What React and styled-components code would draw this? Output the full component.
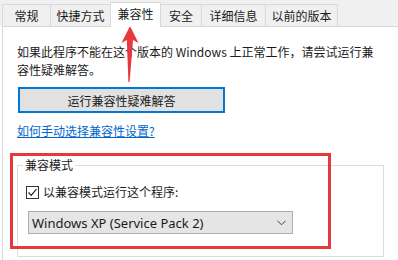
import styled, { createGlobalStyle } from "styled-components";

const GlobalStyle = createGlobalStyle`
  html, body {
    margin: 0;
    padding: 0;
    background: #ffffff;
  }
  body {
    font-family: "Noto Sans CJK SC", "Noto Sans", sans-serif;
    font-size: 12px;
    color: #1a1a1a;
  }
`;

const Frame = styled.div`
  position: relative;
  width: 398px;
  height: 260px;
  overflow: hidden;
  background: #ffffff;
`;

const TabStrip = styled.div`
  display: flex;
  align-items: flex-end;
  height: 26px;
  padding-left: 2px;
  background: #f0f0f0;
`;

const Tab = styled.div`
  position: relative;
  box-sizing: border-box;
  display: flex;
  align-items: center;
  justify-content: center;
  width: ${(p) => p.$width}px;
  height: ${(p) => (p.$active ? 25 : 22)}px;
  margin-left: -1px;
  margin-bottom: ${(p) => (p.$active ? -1 : 0)}px;
  border: 1px solid #d9d9d9;
  border-bottom: none;
  background: ${(p) => (p.$active ? "#ffffff" : "#f0f0f0")};
  z-index: ${(p) => (p.$active ? 2 : 1)};
  padding-bottom: ${(p) => (p.$active ? 2 : 0)}px;
  white-space: nowrap;
  line-height: 1;

  &:first-child {
    margin-left: 0;
  }
`;

const Panel = styled.div`
  position: relative;
  height: 240px;
  margin-left: 2px;
  padding: 16px 0 0 14px;
  border-top: 1px solid #d9d9d9;
  border-left: 1px solid #d9d9d9;
`;

const Intro = styled.p`
  margin: 0;
  line-height: 18px;
  white-space: nowrap;
`;

const TroubleButton = styled.button`
  display: block;
  box-sizing: border-box;
  width: 207px;
  height: 26px;
  margin: 8px 0 0 1px;
  padding: 0;
  border: 2px solid #0078d7;
  background: #e1e1e1;
  font-family: inherit;
  font-size: 12px;
  color: #1a1a1a;
`;

const HelpLink = styled.a`
  display: inline-block;
  margin-top: 9px;
  line-height: 18px;
  color: #0066cc;
  text-decoration: underline;
`;

const Group = styled.fieldset`
  box-sizing: border-box;
  width: 367px;
  min-inline-size: 0;
  margin: 16px 0 0 0;
  padding: 0 0 22px 8px;
  border: 1px solid #dcdcdc;
`;

const Legend = styled.legend`
  margin-left: -3px;
  padding: 0 2px;
  line-height: 18px;
`;

const CheckRow = styled.label`
  display: flex;
  align-items: center;
  gap: 4px;
  margin-top: 9px;
  line-height: 18px;
`;

const CheckBox = styled.span`
  box-sizing: border-box;
  display: flex;
  align-items: center;
  justify-content: center;
  width: 13px;
  height: 13px;
  border: 1px solid #333333;
  background: #ffffff;
`;

const Select = styled.div`
  box-sizing: border-box;
  display: flex;
  align-items: center;
  justify-content: space-between;
  width: 265px;
  height: 23px;
  margin: 10px 0 0 2px;
  padding: 0 6px 0 3px;
  border: 1px solid #adadad;
  background: #e5e5e5;
  font-family: "Noto Sans", "Noto Sans CJK SC", sans-serif;
  font-size: 13px;
`;

const Highlight = styled.div`
  position: absolute;
  left: 10px;
  top: 153px;
  width: 321px;
  height: 96px;
  box-sizing: border-box;
  border: 3px solid #e8383d;
  pointer-events: none;
`;

const Arrow = styled.svg`
  position: absolute;
  left: 116px;
  top: 20px;
  width: 30px;
  height: 66px;
  pointer-events: none;
`;

const tabs = [
  { label: "常规", width: 49 },
  { label: "快捷方式", width: 61 },
  { label: "兼容性", width: 51, active: true },
  { label: "安全", width: 42 },
  { label: "详细信息", width: 65 },
  { label: "以前的版本", width: 73 },
];

const App = () => {
  return (
    <Frame>
      <GlobalStyle />
      <TabStrip>
        {tabs.map((t) => (
          <Tab key={t.label} $width={t.width} $active={t.active}>
            {t.label}
          </Tab>
        ))}
      </TabStrip>
      <Panel>
        <Intro>
          如果此程序不能在这个版本的 Windows 上正常工作，请尝试运行兼
          <br />
          容性疑难解答。
        </Intro>
        <TroubleButton>运行兼容性疑难解答</TroubleButton>
        <HelpLink href="#">如何手动选择兼容性设置?</HelpLink>
        <Group>
          <Legend>兼容模式</Legend>
          <CheckRow>
            <CheckBox>
              <svg width="11" height="11" viewBox="0 0 11 11">
                <polyline
                  points="1.5,5.5 4.2,8.3 9.5,2.2"
                  fill="none"
                  stroke="#222"
                  strokeWidth="1.2"
                />
              </svg>
            </CheckBox>
            以兼容模式运行这个程序:
          </CheckRow>
          <Select>
            Windows XP (Service Pack 2)
            <svg width="9" height="6" viewBox="0 0 9 6">
              <polyline
                points="0.5,0.8 4.5,4.8 8.5,0.8"
                fill="none"
                stroke="#444"
                strokeWidth="1"
              />
            </svg>
          </Select>
        </Group>
      </Panel>
      <Highlight />
      <Arrow viewBox="116 20 30 66">
        <polygon
          points="130,26 138.5,43 133,40 129.6,82 128.4,82 126.8,40 121.5,43"
          fill="#e8383d"
        />
      </Arrow>
    </Frame>
  );
};

export default App;
